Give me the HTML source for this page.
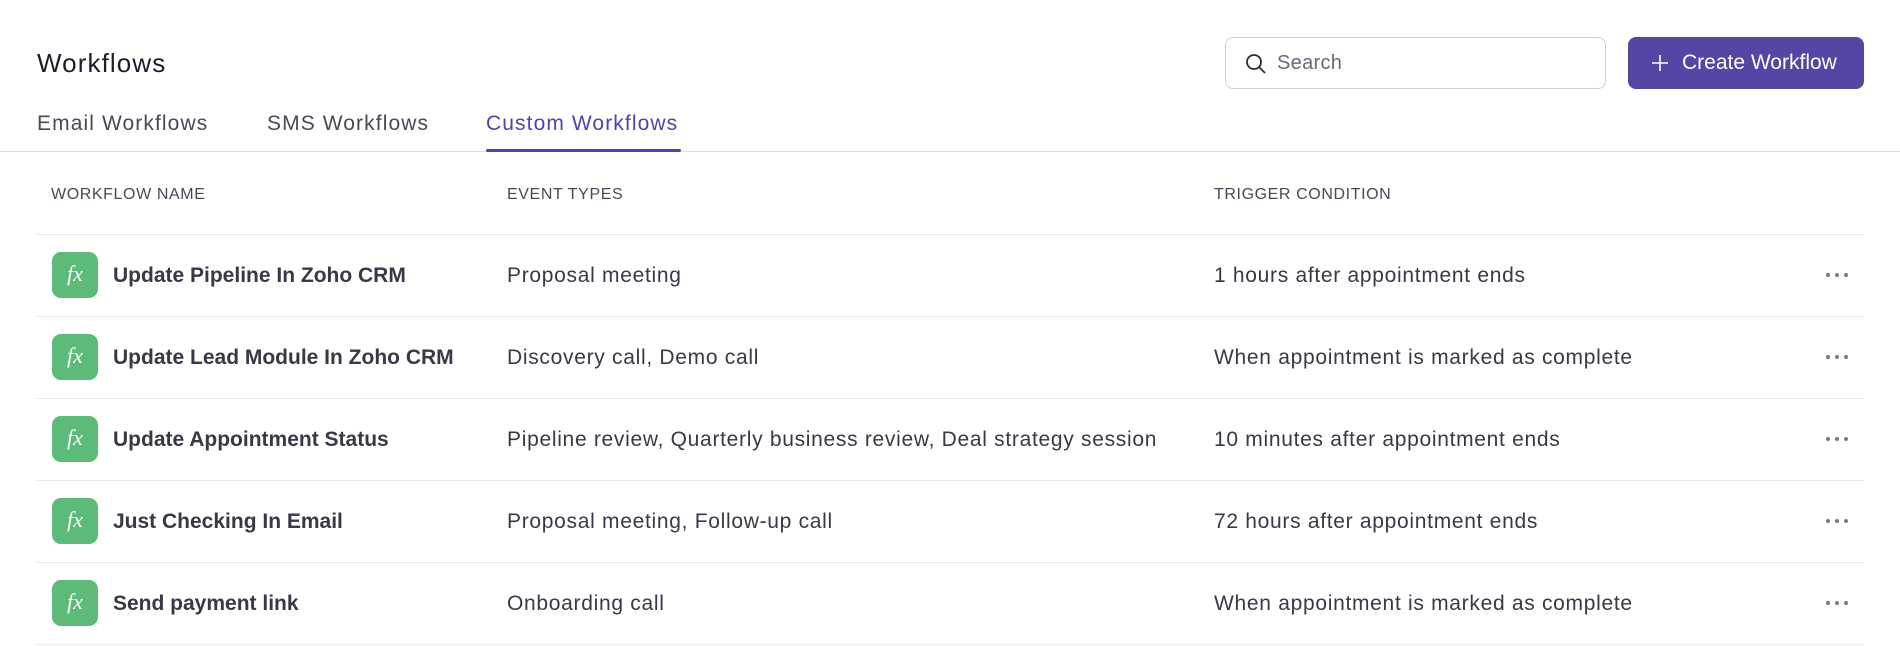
<!DOCTYPE html>
<html><head><meta charset="utf-8"><style>
*{box-sizing:border-box;margin:0;padding:0}
body{width:1900px;height:646px;background:#fff;font-family:"Liberation Sans",sans-serif;color:#2e2b3b;position:relative;overflow:hidden}
.abs{position:absolute}
.title{left:37px;top:48px;font-size:26px;letter-spacing:1.1px;color:#1f1d2b}
.tab{top:112px;font-size:21px;letter-spacing:1.1px;color:#4a4757}
.tab.active{color:#5043a8}
.uline{left:486px;top:149px;width:195px;height:3px;background:#5043a8;border-radius:2px}
.sep{left:0;top:151px;width:1900px;height:1px;background:#dcdce4}
.search{left:1225px;top:37px;width:381px;height:52px;border:1px solid #cfcfdc;border-radius:8px}
.search span{position:absolute;left:51px;top:14px;font-size:20px;letter-spacing:0.3px;color:#6a6878}
.btn{left:1628px;top:37px;width:236px;height:52px;background:#5446a5;border-radius:8px;color:#fff;font-size:21px}
.btn span{position:absolute;left:54px;top:14px}
.hd{top:186px;font-size:16px;letter-spacing:0.6px;color:#4a4757}
.line{left:37px;width:1827px;height:1px;background:#e6e6ec}
.ic{left:52px;width:46px;height:46px;border-radius:9px;background:#5dbb79;color:#fff;font-family:"Liberation Serif",serif;font-style:italic;font-size:22px;text-align:center;line-height:44px}
.nm{left:113px;font-size:21px;font-weight:bold;color:#3a3747}
.cell{font-size:21px;letter-spacing:0.7px;color:#3a3747}
.dots{left:1825px;width:24px;height:6px}
</style></head><body>
<div class="abs title">Workflows</div>
<div class="abs tab" style="left:37px">Email Workflows</div>
<div class="abs tab" style="left:267px">SMS Workflows</div>
<div class="abs tab active" style="left:486px">Custom Workflows</div>
<div class="abs sep"></div>
<div class="abs uline"></div>
<div class="abs search"><svg class="abs" style="left:19px;top:15px" width="22" height="22" viewBox="0 0 22 22" fill="none" stroke="#2e2b3b" stroke-width="1.8"><circle cx="9" cy="9" r="7"/><path d="M14 14l6 6"/></svg><span>Search</span></div>
<div class="abs btn"><svg class="abs" style="left:22px;top:16px" width="20" height="20" viewBox="0 0 20 20" stroke="#fff" stroke-width="1.6"><path d="M10 2v16M2 10h16"/></svg><span>Create Workflow</span></div>
<div class="abs hd" style="left:51px">WORKFLOW NAME</div>
<div class="abs hd" style="left:507px">EVENT TYPES</div>
<div class="abs hd" style="left:1214px">TRIGGER CONDITION</div>
<div class="abs line" style="top:234px"></div>
<div class="abs line" style="top:316px"></div>
<div class="abs line" style="top:398px"></div>
<div class="abs line" style="top:480px"></div>
<div class="abs line" style="top:562px"></div>
<div class="abs line" style="top:644px"></div>

<div class="abs ic" style="top:252px">fx</div>
<div class="abs nm" style="top:264px">Update Pipeline In Zoho CRM</div>
<div class="abs cell" style="left:507px;top:264px">Proposal meeting</div>
<div class="abs cell" style="left:1214px;top:264px">1 hours after appointment ends</div>

<div class="abs ic" style="top:334px">fx</div>
<div class="abs nm" style="top:346px">Update Lead Module In Zoho CRM</div>
<div class="abs cell" style="left:507px;top:346px">Discovery call, Demo call</div>
<div class="abs cell" style="left:1214px;top:346px">When appointment is marked as complete</div>

<div class="abs ic" style="top:416px">fx</div>
<div class="abs nm" style="top:428px">Update Appointment Status</div>
<div class="abs cell" style="left:507px;top:428px">Pipeline review, Quarterly business review, Deal strategy session</div>
<div class="abs cell" style="left:1214px;top:428px">10 minutes after appointment ends</div>

<div class="abs ic" style="top:498px">fx</div>
<div class="abs nm" style="top:510px">Just Checking In Email</div>
<div class="abs cell" style="left:507px;top:510px">Proposal meeting, Follow-up call</div>
<div class="abs cell" style="left:1214px;top:510px">72 hours after appointment ends</div>

<div class="abs ic" style="top:580px">fx</div>
<div class="abs nm" style="top:592px">Send payment link</div>
<div class="abs cell" style="left:507px;top:592px">Onboarding call</div>
<div class="abs cell" style="left:1214px;top:592px">When appointment is marked as complete</div>

<svg class="abs dots" style="top:272px" viewBox="0 0 24 6" fill="#7a7888"><circle cx="3" cy="3" r="2"/><circle cx="12" cy="3" r="2"/><circle cx="21" cy="3" r="2"/></svg>
<svg class="abs dots" style="top:354px" viewBox="0 0 24 6" fill="#7a7888"><circle cx="3" cy="3" r="2"/><circle cx="12" cy="3" r="2"/><circle cx="21" cy="3" r="2"/></svg>
<svg class="abs dots" style="top:436px" viewBox="0 0 24 6" fill="#7a7888"><circle cx="3" cy="3" r="2"/><circle cx="12" cy="3" r="2"/><circle cx="21" cy="3" r="2"/></svg>
<svg class="abs dots" style="top:518px" viewBox="0 0 24 6" fill="#7a7888"><circle cx="3" cy="3" r="2"/><circle cx="12" cy="3" r="2"/><circle cx="21" cy="3" r="2"/></svg>
<svg class="abs dots" style="top:600px" viewBox="0 0 24 6" fill="#7a7888"><circle cx="3" cy="3" r="2"/><circle cx="12" cy="3" r="2"/><circle cx="21" cy="3" r="2"/></svg>
</body></html>
